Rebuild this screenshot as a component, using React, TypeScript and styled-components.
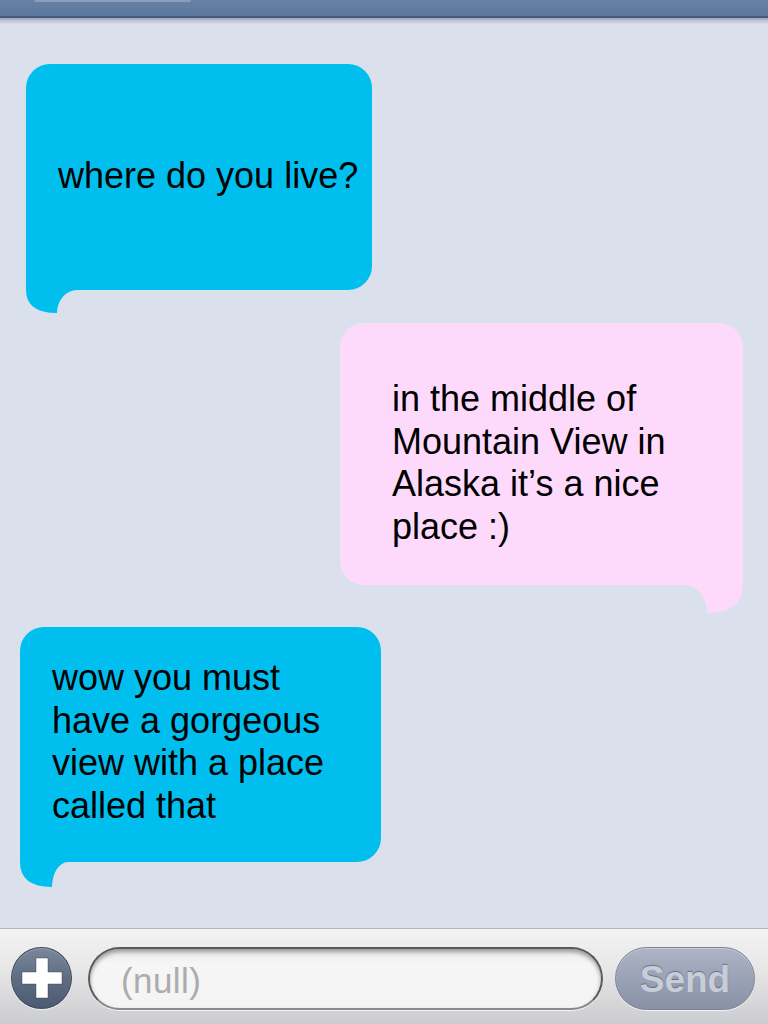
import React from "react";
import styled, { createGlobalStyle } from "styled-components";

const GlobalStyle = createGlobalStyle`
  html, body {
    margin: 0;
    padding: 0;
    background: #dbe1ec;
  }
  * { box-sizing: border-box; }
`;

const Screen = styled.div`
  width: 768px;
  height: 1024px;
  display: flex;
  flex-direction: column;
  overflow: hidden;
  background: #dbe1ec;
  font-family: "Liberation Sans", Arial, Helvetica, sans-serif;
`;

const NavBar = styled.div`
  height: 18px;
  flex: none;
  display: flex;
  align-items: flex-start;
  padding-left: 34px;
  background: linear-gradient(to bottom, #6882a5 0%, #5b779c 100%);
  border-bottom: 2px solid #435c7f;
`;

const NavButtonEdge = styled.div`
  width: 157px;
  height: 2px;
  border-radius: 0 0 6px 6px;
  background: rgba(200, 214, 232, 0.35);
`;

const Messages = styled.div`
  flex: 1;
  display: flex;
  flex-direction: column;
  padding-top: 46px;
  background: linear-gradient(to bottom, #9aa3b2 0px, #c3cad6 3px, #dbe1ec 7px) no-repeat, #dbe1ec;
  background-size: 100% 7px, auto;
`;

type Side = "left" | "right";

const Bubble = styled.div<{
  $side: Side;
  $x: number;
  $gap: number;
  $w: number;
  $h: number;
  $pt: number;
  $pl: number;
  $bg: string;
}>`
  position: relative;
  align-self: flex-start;
  margin-left: ${(p) => p.$x}px;
  margin-top: ${(p) => p.$gap}px;
  width: ${(p) => p.$w}px;
  height: ${(p) => p.$h}px;
  padding: ${(p) => p.$pt}px 0 0 ${(p) => p.$pl}px;
  background: ${(p) => p.$bg};
  border-radius: 24px;
  ${(p) =>
    p.$side === "left"
      ? "border-bottom-left-radius: 0;"
      : "border-bottom-right-radius: 0;"}
`;

const BubbleText = styled.div`
  font-family: "Liberation Sans", Arial, Helvetica, sans-serif;
  font-size: 36px;
  line-height: 42.5px;
  color: #000;
  white-space: nowrap;
`;

const TailSvg = styled.svg<{ $side: Side }>`
  position: absolute;
  top: calc(100% - 1px);
  ${(p) => (p.$side === "left" ? "left: 0;" : "right: 0; transform: scaleX(-1);")}
  display: block;
  overflow: visible;
`;

function Tail({ side, w, h, r, color }: { side: Side; w: number; h: number; r: number; color: string }) {
  const W = w + r;
  const d = `M0 -1 L0 0 Q0 ${h} ${w} ${h} A${r} ${h} 0 0 1 ${W} 0 L${W} -1 Z`;
  return (
    <TailSvg $side={side} width={W} height={h + 1} viewBox={`0 -1 ${W} ${h + 1}`}>
      <path d={d} fill={color} />
    </TailSvg>
  );
}

const BottomBar = styled.div`
  flex: none;
  height: 96px;
  display: flex;
  align-items: flex-start;
  padding: 18px 0 0 11px;
  border-top: 1px solid #b3b8c0;
  background: linear-gradient(to bottom, #f3f3f3 0%, #e6e6e7 45%, #cbcccf 100%);
`;

const PlusButton = styled.div`
  width: 61px;
  height: 62px;
  flex: none;
  border-radius: 50%;
  display: flex;
  align-items: center;
  justify-content: center;
  background: linear-gradient(to bottom, #7a879a 0%, #5f6d83 50%, #4d5b72 100%);
  border: 1.5px solid #3e485a;
  box-shadow: 0 1px 0 rgba(255, 255, 255, 0.7), inset 0 1px 1px rgba(255, 255, 255, 0.25);
`;

const InputField = styled.div`
  margin-left: 16px;
  width: 515px;
  height: 63px;
  flex: none;
  border-radius: 32px;
  border: 2px solid #5a5a5a;
  border-bottom-color: #8a8a8a;
  background: linear-gradient(to bottom, #e9e9e9 0%, #f6f6f6 25%, #f4f4f4 100%);
  box-shadow: inset 0 3px 4px rgba(0, 0, 0, 0.35), 0 1px 0 rgba(255, 255, 255, 0.8);
  display: flex;
  align-items: center;
  padding-left: 31px;
`;

const Placeholder = styled.span`
  font-family: "Liberation Sans", Arial, Helvetica, sans-serif;
  font-size: 35px;
  letter-spacing: 0.4px;
  color: #acacac;
  margin-top: 4px;
`;

const SendButton = styled.div`
  margin-left: 12px;
  width: 140px;
  height: 63px;
  flex: none;
  border-radius: 32px;
  border: 1px solid #7c8497;
  background: linear-gradient(to bottom, #adb4c5 0%, #9aa2b6 50%, #8891a6 100%);
  box-shadow: 0 1px 0 rgba(255, 255, 255, 0.7), inset 0 1px 1px rgba(255, 255, 255, 0.35);
  display: flex;
  align-items: center;
  justify-content: center;
`;

const SendLabel = styled.span`
  font-family: "Liberation Sans", Arial, Helvetica, sans-serif;
  font-weight: bold;
  font-size: 37px;
  color: #c9cdd7;
  text-shadow: 0 -1px 1px rgba(70, 78, 96, 0.6);
  margin-top: 2px;
`;

const BLUE = "#00bfef";
const PINK = "#fdd9fb";

export default function App() {
  return (
    <>
      <GlobalStyle />
      <Screen>
        <NavBar>
          <NavButtonEdge />
        </NavBar>
        <Messages>
          <Bubble $side="left" $x={26} $gap={0} $w={346} $h={226} $pt={91} $pl={32} $bg={BLUE}>
            <BubbleText>where do you live?</BubbleText>
            <Tail side="left" w={31} h={23} r={20} color={BLUE} />
          </Bubble>
          <Bubble $side="right" $x={340} $gap={33} $w={403} $h={262} $pt={55} $pl={52} $bg={PINK}>
            <BubbleText>
              in the middle of
              <br />
              Mountain View in
              <br />
              Alaska it’s a nice
              <br />
              place :)
            </BubbleText>
            <Tail side="right" w={36} h={28} r={22} color={PINK} />
          </Bubble>
          <Bubble $side="left" $x={20} $gap={42} $w={361} $h={235} $pt={30} $pl={32} $bg={BLUE}>
            <BubbleText>
              wow you must
              <br />
              have a gorgeous
              <br />
              view with a place
              <br />
              called that
            </BubbleText>
            <Tail side="left" w={32} h={25} r={16} color={BLUE} />
          </Bubble>
        </Messages>
        <BottomBar>
          <PlusButton>
            <svg width="42" height="44" viewBox="0 0 42 44">
              <path
                d="M15 2 H27 V16 H41 V28 H27 V42 H15 V28 H1 V16 H15 Z"
                fill="#ffffff"
                stroke="rgba(40,50,65,0.5)"
                strokeWidth="0.8"
              />
            </svg>
          </PlusButton>
          <InputField>
            <Placeholder>(null)</Placeholder>
          </InputField>
          <SendButton>
            <SendLabel>Send</SendLabel>
          </SendButton>
        </BottomBar>
      </Screen>
    </>
  );
}
